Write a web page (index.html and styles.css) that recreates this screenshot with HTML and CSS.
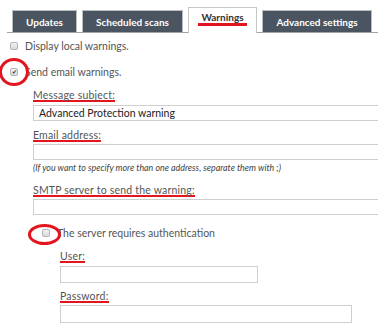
FILE: index.html
```html
<!DOCTYPE html>
<html lang="en">
<head>
    <meta charset="UTF-8">
    <meta name="viewport" content="width=device-width, initial-scale=1.0">
    <title>Warnings settings</title>
    <link rel="stylesheet" href="styles.css">
</head>
<body>
    <div class="panel">
        <ul class="tabs">
            <li class="tab tab-updates">Updates</li>
            <li class="tab tab-scans">Scheduled scans</li>
            <li class="tab tab-warnings active"><span class="tab-mark">Warnings</span></li>
            <li class="tab tab-advanced">Advanced settings</li>
        </ul>

        <label class="option option-local">
            <span class="check"></span>
            Display local warnings.
        </label>

        <label class="option option-send">
            <span class="check checked">&#10004;<span class="ring ring-send"></span></span>
            Send email warnings.
        </label>

        <div class="fields">
            <div class="field field-subject">
                <span class="field-label">Message subject:</span>
                <div class="input">Advanced Protection warning</div>
            </div>

            <div class="field field-email">
                <span class="field-label">Email address:</span>
                <div class="input"></div>
                <p class="hint">(If you want to specify more than one address, separate them with ;)</p>
            </div>

            <div class="field field-smtp">
                <span class="field-label">SMTP server to send the warning:</span>
                <div class="input"></div>
            </div>

            <label class="option option-auth">
                <span class="check"><span class="ring ring-auth"></span></span>
                The server requires authentication
            </label>

            <div class="auth">
                <div class="field field-user">
                    <span class="field-label">User:</span>
                    <div class="input input-user"></div>
                </div>
                <div class="field field-password">
                    <span class="field-label">Password:</span>
                    <div class="input input-password"></div>
                </div>
            </div>
        </div>
    </div>
</body>
</html>
```

FILE: styles.css
```css
* {
    box-sizing: border-box;
    font-family: Lato, 'Open Sans', Arial, sans-serif;
}

html, body {
    overflow: hidden;
}

body {
    margin: 0;
    background: white;
    color: #555;
    font-size: 10px;
}

.panel {
    width: 378px;
    padding-left: 7px;
}

/* tabs */

.tabs {
    display: flex;
    align-items: flex-end;
    gap: 5px;
    margin: 7px 0 0;
    padding: 0 0 0 5px;
    list-style: none;
    border-bottom: 1px solid #a3a3a3;
}

.tab {
    flex: none;
    height: 22px;
    display: flex;
    align-items: center;
    justify-content: center;
    background: #4a5561;
    border: 1px solid #b9bec3;
    border-bottom: none;
    color: white;
    font-weight: bold;
    white-space: nowrap;
}

.tab-updates { width: 65px; }
.tab-scans { width: 101px; }
.tab-warnings { width: 69px; }
.tab-advanced { width: 110px; }

.tab.active {
    height: 26px;
    margin-bottom: -1px;
    padding-bottom: 3px;
    background: white;
    border-color: #c6c6c6;
    color: #333;
}

.tab-mark {
    padding: 0 3px 1px;
    line-height: 10px;
    border-bottom: 3px solid #e3161f;
}

/* checkbox rows */

.option {
    display: flex;
    align-items: center;
    gap: 7px;
    line-height: 12px;
    font-size: 10.5px;
    color: #555;
}

.option-local {
    margin: 7px 0 0 3px;
}

.option-send {
    margin: 14px 0 0 3px;
}

.check {
    position: relative;
    width: 8px;
    height: 8px;
    border: 1px solid #b4b4b4;
    border-radius: 2px;
    background: linear-gradient(#f2f2f2, #dadada);
    font-size: 6px;
    line-height: 6px;
    text-align: center;
    color: #333;
}

.ring {
    position: absolute;
    border: 3px solid #e3161f;
    border-radius: 50%;
}

.ring-send {
    left: -12px;
    top: -11px;
    width: 30px;
    height: 28px;
}

.ring-auth {
    left: -15px;
    top: -6px;
    width: 33px;
    height: 21px;
}

/* text fields */

.fields {
    padding-left: 26px;
}

.field-label {
    display: block;
    width: fit-content;
    line-height: 10px;
    border-bottom: 2px solid #e3161f;
    font-size: 10.5px;
    letter-spacing: 0.2px;
    color: #555;
    white-space: nowrap;
}

.input {
    height: 16px;
    width: 360px;
    margin-top: 3px;
    padding: 0 5px;
    border: 1px solid #cfcfcf;
    background: white;
    color: #222;
    line-height: 14px;
    font-size: 10.5px;
}

.field-subject {
    margin-top: 12px;
}

.field-email {
    margin-top: 9px;
}

.field-email .input,
.field-smtp .input {
    margin-top: 2px;
}

.hint {
    margin: 3px 0 0;
    font-size: 8.9px;
    line-height: 10px;
    font-style: italic;
    color: #444;
    white-space: nowrap;
}

.field-smtp {
    margin-top: 12px;
}

.option-auth {
    margin: 12px 0 0 9px;
}

.auth {
    padding-left: 27px;
}

.field-user {
    margin-top: 12px;
}

.field-password {
    margin-top: 8px;
}

.input-user {
    width: 198px;
    height: 17px;
}

.input-password {
    width: 292px;
    height: 18px;
    margin-top: 2px;
}
```
